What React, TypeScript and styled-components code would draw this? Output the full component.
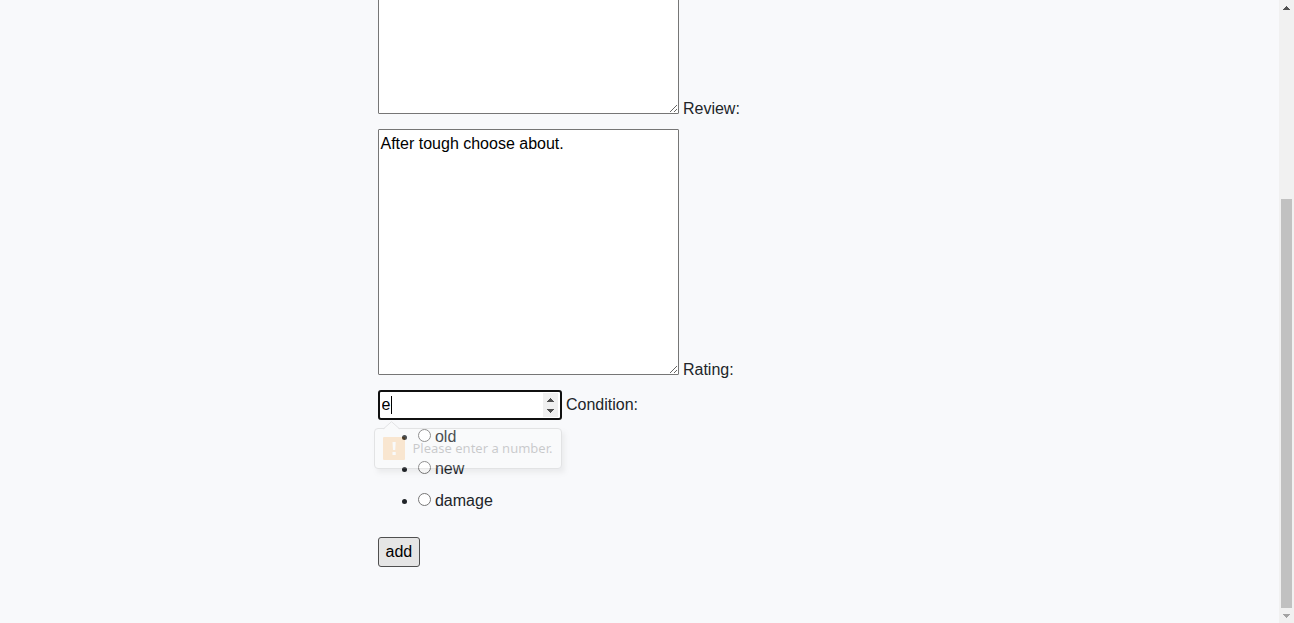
import React from "react";
import styled, { createGlobalStyle } from "styled-components";

const GlobalStyle = createGlobalStyle`
  *, *::before, *::after { box-sizing: border-box; }
  body {
    margin: 0;
    background: #f8f9fb;
    color: #212529;
    font-family: "Liberation Sans", Arial, sans-serif;
    font-size: 16px;
    line-height: 24px;
  }
`;

const Page = styled.div`
  display: flex;
  height: 100vh;
  overflow: hidden;
`;

const Content = styled.main`
  flex: 1;
  min-width: 0;
  display: flex;
  flex-direction: column;
  justify-content: flex-end;
  padding-bottom: 56px;
`;

const Form = styled.form`
  width: 100%;
  max-width: 524px;
  margin: 0 auto;
`;

const Label = styled.label`
  display: inline-block;
  margin-bottom: 8px;
`;

const Legend = styled.span`
  display: inline-block;
  margin-bottom: 8px;
`;

const TextArea = styled.textarea`
  width: 301px;
  height: 246px;
  margin: 0;
  padding: 2px;
  border: 1px solid #767676;
  border-radius: 1px;
  background: #fff;
  color: #000;
  font: inherit;
  resize: vertical;
  overflow: auto;
`;

const NumberField = styled.span`
  position: relative;
  display: inline-block;
`;

const NumberInput = styled.input`
  width: 184px;
  height: 30px;
  margin: 0;
  padding: 1px 2px;
  border: 2px solid #101010;
  border-radius: 3px;
  background: #fff;
  color: #000;
  caret-color: transparent;
  font: inherit;
  outline: none;
`;

const Caret = styled.span`
  position: absolute;
  left: 13px;
  top: 6px;
  width: 1px;
  height: 18px;
  background: #000;
`;

const Spinner = styled.span`
  position: absolute;
  right: 4px;
  top: 3px;
  display: flex;
  flex-direction: column;
  width: 15px;
  height: 24px;
  padding: 1px 0;
  background: #efefef;
`;

const ArrowButton = styled.button`
  flex: 1;
  display: flex;
  align-items: center;
  justify-content: center;
  width: 100%;
  padding: 0;
  border: 0;
  background: transparent;
`;

const Options = styled.ul`
  margin: 0 0 16px;
  padding-left: 40px;
`;

const Radio = styled.input`
  width: 13px;
  height: 13px;
  margin: 0;
`;

const AddButton = styled.button`
  display: block;
  height: 30px;
  margin: 0;
  padding: 0 7px;
  border: 1px solid #4f4f4f;
  border-radius: 3px;
  background: #e5e5e5;
  color: #000;
  font: inherit;
`;

const Bubble = styled.span`
  position: absolute;
  z-index: 1;
  left: -4px;
  top: 38px;
  display: flex;
  align-items: center;
  gap: 8px;
  width: 188px;
  height: 41px;
  padding: 0 8px 1px;
  border: 1px solid #888;
  border-radius: 4px;
  background: #fff;
  box-shadow: 3px 4px 4px rgba(0, 0, 0, 0.25);
  color: #000;
  font-family: "Noto Sans", "Open Sans", sans-serif;
  font-size: 13px;
  white-space: nowrap;
  opacity: 0.19;
  pointer-events: none;
`;

const BubbleTip = styled.svg`
  position: absolute;
  left: 8px;
  top: -8px;
`;

const Scrollbar = styled.div`
  display: flex;
  flex-direction: column;
  flex: 0 0 15px;
  background: #f1f1f1;
`;

const ScrollButton = styled.div`
  display: flex;
  align-items: center;
  justify-content: center;
  height: 15px;
`;

const ScrollGap = styled.div`
  flex: 184;
`;

const ScrollThumb = styled.div`
  flex: 409;
  margin: 0 2px;
  background: #c1c1c1;
`;

const Triangle = ({ down = false, color = "#505050" }: { down?: boolean; color?: string }) => (
  <svg width="7" height="4" viewBox="0 0 7 4" shapeRendering="crispEdges" aria-hidden="true">
    <path d={down ? "M0 0h7v1H6v1H5v1H4v1H3V3H2V2H1V1H0z" : "M0 4h7V3H6V2H5V1H4V0H3v1H2v1H1v1H0z"} fill={color} />
  </svg>
);

const conditions = ["old", "new", "damage"];

export default function App() {
  return (
    <Page>
      <GlobalStyle />
      <Content>
        <Form noValidate onSubmit={(e) => e.preventDefault()}>
          <div>
            <TextArea aria-label="Description" /> <Label htmlFor="review">Review:</Label>
          </div>
          <div>
            <TextArea id="review" defaultValue="After tough choose about." />{" "}
            <Label htmlFor="rating">Rating:</Label>
          </div>
          <div>
            <NumberField>
              <NumberInput id="rating" type="text" inputMode="numeric" defaultValue="e" />
              <Caret />
              <Spinner>
                <ArrowButton type="button" aria-label="Increase"><Triangle /></ArrowButton>
                <ArrowButton type="button" aria-label="Decrease"><Triangle down /></ArrowButton>
              </Spinner>
              <Bubble role="alert">
                <BubbleTip width="18" height="9" viewBox="0 0 18 9" aria-hidden="true">
                  <path d="M0 9L8.500 .7L17 9z" fill="#fff" />
                  <path d="M.5 7.800L8.500 .7L16.500 7.800" fill="none" stroke="#888" />
                </BubbleTip>
                <svg width="22" height="23" viewBox="0 0 22 23" aria-hidden="true">
                  <rect width="22" height="23" rx="1" fill="#ff9a1f" />
                  <path d="M9.500 5h3.200l-.5 8H10zM9.500 15h3.200v3H9.500z" fill="#fff" />
                </svg>
                Please enter a number.
              </Bubble>
            </NumberField>{" "}
            <Legend id="condition">Condition:</Legend>
          </div>
          <Options role="radiogroup" aria-labelledby="condition">
            {conditions.map((c) => (
              <li key={c}>
                <Radio type="radio" name="condition" id={c} value={c} /> <Label htmlFor={c}>{c}</Label>
              </li>
            ))}
          </Options>
          <AddButton type="submit">add</AddButton>
        </Form>
      </Content>
      <Scrollbar aria-hidden="true">
        <ScrollButton><Triangle /></ScrollButton>
        <ScrollGap />
        <ScrollThumb />
        <ScrollButton><Triangle down color="#a3a3a3" /></ScrollButton>
      </Scrollbar>
    </Page>
  );
}
